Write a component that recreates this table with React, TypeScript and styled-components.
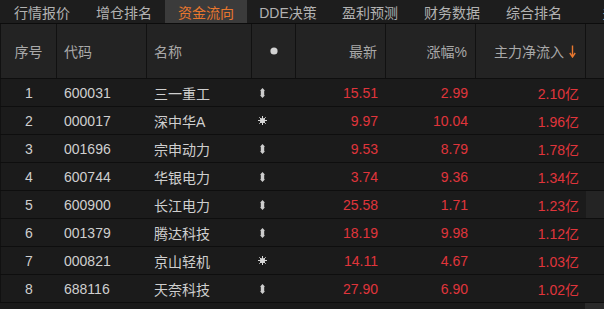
import React from 'react'
import styled, { createGlobalStyle } from 'styled-components'

const GlobalStyle = createGlobalStyle`
  html, body {
    margin: 0;
    padding: 0;
    background: #1a1a1a;
    overflow: hidden;
  }
  body {
    font-family: 'Liberation Sans', 'Noto Sans CJK SC', sans-serif;
    font-size: 14px;
  }
`

const COLS = '57px 90px 105px 44px 90px 90px 110px 18px'

const Page = styled.div`
  width: 604px;
  height: 309px;
  background: #1a1a1a;
  overflow: hidden;
`

const TabBar = styled.div`
  display: flex;
  height: 23px;
  padding-left: 1px;
  background: #1d1d1d;
  border-bottom: 1px solid #0c0c0c;
  white-space: nowrap;
  overflow: hidden;
`

const Tab = styled.div<{ active?: boolean }>`
  flex: 0 0 82px;
  display: flex;
  align-items: center;
  justify-content: center;
  color: ${(p) => (p.active ? '#e8772e' : '#b2b2b2')};
  background: ${(p) => (p.active ? '#3b3b3b' : 'transparent')};
`

const HeaderRow = styled.div`
  display: grid;
  grid-template-columns: ${COLS};
  height: 54px;
  background: #232323;
  border-bottom: 1px solid #0e0e0e;
`

const HeadCell = styled.div<{ align?: 'left' | 'center' | 'right' }>`
  display: flex;
  align-items: center;
  justify-content: ${(p) =>
    p.align === 'right' ? 'flex-end' : p.align === 'center' ? 'center' : 'flex-start'};
  padding: ${(p) => (p.align === 'right' ? '0 8px 0 0' : p.align === 'center' ? '0' : '0 0 0 7px')};
  border-right: 1px solid #111;
  color: #a9a9a9;
  gap: 5px;
  &:first-child {
    border-left: 1px solid #111;
    padding-left: 0;
    justify-content: center;
  }
  &:last-child {
    border-right: none;
  }
`

const Row = styled.div`
  display: grid;
  grid-template-columns: ${COLS};
  height: 27px;
  background: #1b1b1b;
  border-bottom: 1px solid #0e0e0e;
`

const Cell = styled.div<{ align?: 'left' | 'center' | 'right'; red?: boolean; pad?: number }>`
  display: flex;
  align-items: center;
  justify-content: ${(p) =>
    p.align === 'right' ? 'flex-end' : p.align === 'center' ? 'center' : 'flex-start'};
  padding: ${(p) => (p.align === 'right' ? `0 ${p.pad ?? 8}px 0 0` : p.align === 'center' ? '0' : `0 0 0 ${p.pad ?? 7}px`)};
  color: ${(p) => (p.red ? '#e0353b' : '#cfcfcf')};
  white-space: nowrap;
  &:first-child {
    border-left: 1px solid #111;
  }
`

const Edge = styled.div<{ lit?: boolean }>`
  background: ${(p) => (p.lit ? '#242424' : 'transparent')};
`

const Scroll = styled.div`
  display: flex;
  justify-content: flex-end;
  div {
    width: 19px;
    height: 6px;
    background: #2a2a2a;
  }
`

const Dot = () => (
  <svg width="8" height="8" viewBox="0 0 8 8">
    <circle cx="4" cy="4" r="3.6" fill="#d2d2d2" />
  </svg>
)

const DownArrow = () => (
  <svg width="7" height="13" viewBox="0 0 7 13">
    <path d="M3.5 0.5 V11" stroke="#e8772e" strokeWidth="1.4" />
    <path d="M0.8 8 L3.5 12 L6.2 8" stroke="#e8772e" strokeWidth="1.4" fill="none" />
  </svg>
)

const UpDown = () => (
  <svg width="5" height="10" viewBox="0 0 5 10">
    <path d="M2.5 0 L5 2.8 H4.2 V7.2 H5 L2.5 10 L0 7.2 H0.8 V2.8 H0 Z" fill="#cdcdcd" />
    <rect x="1.2" y="2" width="2.6" height="6" rx="1" fill="#cdcdcd" />
  </svg>
)

const Star = () => (
  <svg width="9" height="9" viewBox="0 0 9 9">
    <circle cx="4.5" cy="4.5" r="2.6" fill="#d6d6d6" />
    <g stroke="#d6d6d6" strokeWidth="1">
      <path d="M4.5 0 V9 M0 4.5 H9 M1.3 1.3 L7.7 7.7 M7.7 1.3 L1.3 7.7" />
    </g>
  </svg>
)

const tabs = ['行情报价', '增仓排名', '资金流向', 'DDE决策', '盈利预测', '财务数据', '综合排名', '多图']

const rows = [
  { n: 1, code: '600031', name: '三一重工', icon: 'ud', last: '15.51', pct: '2.99', flow: '2.10亿' },
  { n: 2, code: '000017', name: '深中华A', icon: 'star', last: '9.97', pct: '10.04', flow: '1.96亿' },
  { n: 3, code: '001696', name: '宗申动力', icon: 'ud', last: '9.53', pct: '8.79', flow: '1.78亿' },
  { n: 4, code: '600744', name: '华银电力', icon: 'ud', last: '3.74', pct: '9.36', flow: '1.34亿' },
  { n: 5, code: '600900', name: '长江电力', icon: 'ud', last: '25.58', pct: '1.71', flow: '1.23亿' },
  { n: 6, code: '001379', name: '腾达科技', icon: 'ud', last: '18.19', pct: '9.98', flow: '1.12亿' },
  { n: 7, code: '000821', name: '京山轻机', icon: 'star', last: '14.11', pct: '4.67', flow: '1.03亿' },
  { n: 8, code: '688116', name: '天奈科技', icon: 'ud', last: '27.90', pct: '6.90', flow: '1.02亿' },
]

export default function App() {
  return (
    <Page>
      <GlobalStyle />
      <TabBar>
        {tabs.map((t) => (
          <Tab key={t} active={t === '资金流向'}>
            {t}
          </Tab>
        ))}
      </TabBar>
      <HeaderRow>
        <HeadCell>序号</HeadCell>
        <HeadCell>代码</HeadCell>
        <HeadCell>名称</HeadCell>
        <HeadCell align="center">
          <Dot />
        </HeadCell>
        <HeadCell align="right">最新</HeadCell>
        <HeadCell align="right">涨幅%</HeadCell>
        <HeadCell align="right" style={{ paddingRight: 9 }}>
          主力净流入
          <DownArrow />
        </HeadCell>
        <HeadCell />
      </HeaderRow>
      {rows.map((r) => (
        <Row key={r.n}>
          <Cell align="center">{r.n}</Cell>
          <Cell>{r.code}</Cell>
          <Cell>{r.name}</Cell>
          <Cell pad={r.icon === 'star' ? 6 : 8}>{r.icon === 'star' ? <Star /> : <UpDown />}</Cell>
          <Cell align="right" red>
            {r.last}
          </Cell>
          <Cell align="right" red>
            {r.pct}
          </Cell>
          <Cell align="right" red pad={7}>
            {r.flow}
          </Cell>
          <Edge lit={r.n === 5} />
        </Row>
      ))}
      <Scroll>
        <div />
      </Scroll>
    </Page>
  )
}
